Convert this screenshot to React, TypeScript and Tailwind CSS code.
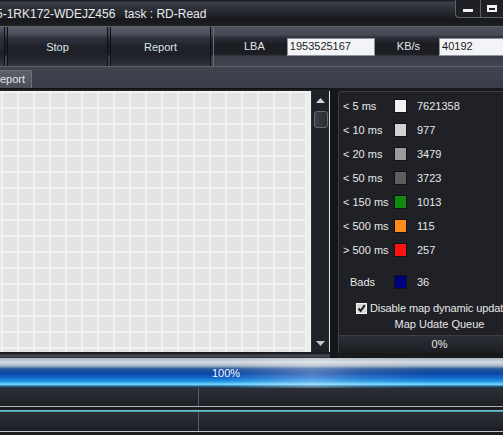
import React from "react";

const legend = [
  { label: "< 5 ms", color: "#f2f2f2", value: "7621358" },
  { label: "< 10 ms", color: "#d2d2d2", value: "977" },
  { label: "< 20 ms", color: "#9c9c9c", value: "3479" },
  { label: "< 50 ms", color: "#5e5e5e", value: "3723" },
  { label: "< 150 ms", color: "#108a10", value: "1013" },
  { label: "< 500 ms", color: "#ff8c1a", value: "115" },
  { label: "> 500 ms", color: "#ff1212", value: "257" },
];

function Swatch({ color }: { color: string }) {
  return (
    <div
      className="w-[13px] h-[14px] shrink-0 border border-[#111214]"
      style={{ backgroundColor: color }}
    />
  );
}

function ToolButton({ label, w }: { label: string; w: string }) {
  return (
    <div
      className={`${w} h-[39px] shrink-0 flex items-center justify-center border-x border-[#0f1013] bg-[linear-gradient(to_bottom,#5a5e6a_0%,#4c505c_18%,#30343e_28%,#1f222a_50%,#1d2027_70%,#2a2e38_92%,#33373f_100%)] text-[#dfe3ea]`}
    >
      <span className="relative mt-[1px]">{label}</span>
    </div>
  );
}

export default function App() {
  return (
    <div className="w-[503px] h-[435px] overflow-hidden bg-[#1a1c20] font-['Liberation_Sans',Arial,sans-serif] text-[11px] text-[#e6e8ec] leading-none select-none">
      {/* Title bar */}
      <div className="relative h-[26px] flex items-center bg-[linear-gradient(to_bottom,#0e0f11_0%,#3c3f47_8%,#2c2f36_35%,#17191d_75%,#1d1f23_100%)]">
        <div className="flex items-center ml-[-4px] mt-[2px] text-[#e8eaee] text-[12px] whitespace-nowrap">
          <span>5-1RK172-WDEJZ456</span>
          <span className="ml-[9px]">task : RD-Read</span>
        </div>
        <div className="absolute right-0 top-0 flex h-[18px]">
          <div className="w-[25px] h-[18px] rounded-bl-[4px] border-l border-b border-[#5d616b] bg-[#1e2025] flex items-center justify-center">
            <div className="w-[10px] h-[3px] bg-[#f2f2f2] mt-[4px]" />
          </div>
          <div className="w-[23px] h-[18px] border-l border-b border-[#5d616b] bg-[#1e2025] flex items-center pl-[6px]">
            <div className="w-[10px] h-[7px] border-[2px] border-t-[3px] border-[#f2f2f2]" />
          </div>
        </div>
      </div>
      <div className="h-[1px] bg-[#5e626c]" />

      {/* Toolbar */}
      <div className="h-[39px] flex gap-[2px] bg-[linear-gradient(to_bottom,#4f535f_0%,#454955_20%,#2a2d35_28%,#1b1d23_45%,#1c1e24_70%,#3a3e49_75%,#40444f_100%)] text-[11px] whitespace-nowrap">
        <div className="w-[5px] h-[39px] shrink-0 border-r border-[#0f1013] bg-[linear-gradient(to_bottom,#565a66_0%,#2e323c_28%,#1d2027_70%,#33373f_100%)]" />
        <ToolButton label="Stop" w="w-[101px]" />
        <ToolButton label="Report" w="w-[101px]" />
        <div className="flex items-center pl-[30px] shrink-0 border-l border-[#6a6e7a]">
          <span className="text-[#e4e6ea]">LBA</span>
          <div className="ml-[22px] w-[88px] h-[18px] bg-[#f3f4f7] border border-[#8e949e] flex items-center pl-[2px] text-[#1a1a1a] text-[11px]">
            1953525167
          </div>
          <span className="ml-[22px] text-[#e4e6ea]">KB/s</span>
          <div className="ml-[19px] w-[88px] h-[18px] bg-[#f3f4f7] border border-[#8e949e] flex items-center pl-[2px] text-[#1a1a1a] text-[11px]">
            40192
          </div>
        </div>
      </div>
      <div className="h-[1px] bg-[#5c606b]" />

      {/* Tab row */}
      <div className="h-[21px] flex items-end bg-[linear-gradient(to_bottom,#41444e_0%,#3a3d47_100%)]">
        <div className="ml-[-14px] h-[18px] px-[6px] flex items-center rounded-tr-[2px] border-t border-r border-[#6e727c] bg-[linear-gradient(to_bottom,#5c606b_0%,#4a4e58_100%)] text-[#e4e6ea]">
          Report
        </div>
      </div>

      {/* Main */}
      <div className="h-[270px] flex bg-[#17191d]">
        <div className="w-[330px] shrink-0 flex flex-col">
          <div className="h-[3px] bg-[linear-gradient(to_bottom,#0c0d0f,#26282e)]" />
          <div className="h-[261px] flex">
            <div className="w-[311px] h-full bg-[#eceef0] pr-[5px]">
              <div className="w-full h-full bg-[#e2e3e5] bg-[linear-gradient(to_right,#f2f2f3_0px,#f2f2f3_2px,transparent_2px),linear-gradient(to_bottom,#f2f2f3_0px,#f2f2f3_2px,transparent_2px)] [background-size:16px_16px] [background-position:1px_0px]" />
            </div>
            <div className="w-[18px] h-full bg-[#1f2228] border-l border-[#2b2e35] flex flex-col items-center relative">
              <svg width="9" height="5" viewBox="0 0 9 5" className="mt-[7px]">
                <path d="M0 5 L4.5 0 L9 5 Z" fill="#d0d4da" />
              </svg>
              <div className="mt-[8px] w-[14px] h-[17px] rounded-[3px] border border-[#646871] bg-[linear-gradient(to_right,#3a3e47,#2a2d34)]" />
              <svg width="9" height="5" viewBox="0 0 9 5" className="absolute bottom-[6px]">
                <path d="M0 0 L9 0 L4.5 5 Z" fill="#c4c8ce" />
              </svg>
            </div>
            <div className="w-[1px] h-full bg-[#e2e4e8]" />
          </div>
          <div className="h-[6px] bg-[linear-gradient(to_bottom,#101113_0%,#2c2f36_40%,#4a4e56_60%,#2a2d33_100%)]" />
        </div>
        <div className="w-[8px] shrink-0 bg-[#141619]" />
        <div className="w-[202px] shrink-0 mt-[3px] h-[262px] rounded-tl-[4px] border-l border-t border-[#3c3f47] bg-[#1f2126] flex flex-col pt-[2px] text-[#e8e8ea] whitespace-nowrap">
          {legend.map((r) => (
            <div key={r.label} className="h-[24px] flex items-center pl-[4px]">
              <span className="w-[51px]">{r.label}</span>
              <Swatch color={r.color} />
              <span className="ml-[10px]">{r.value}</span>
            </div>
          ))}
          <div className="h-[24px] mt-[8px] flex items-center pl-[11px]">
            <span className="w-[44px]">Bads</span>
            <Swatch color="#00007e" />
            <span className="ml-[10px]">36</span>
          </div>
          <div className="h-[16px] mt-[6px] flex items-center pl-[17px]">
            <div className="w-[11px] h-[11px] border border-[#f4f4f4] bg-[#d8d8d8] flex items-center justify-center">
              <svg width="9" height="9" viewBox="0 0 9 9">
                <path d="M1.5 4.5 L3.6 7 L7.8 1.2" stroke="#202020" strokeWidth="2" fill="none" />
              </svg>
            </div>
            <span className="ml-[3px] tracking-[-0.1px]">Disable map dynamic update</span>
          </div>
          <div className="h-[16px] flex items-center justify-center">Map Udate Queue</div>
          <div className="mt-[3px] h-[18px] border-t border-[#3c3f48] bg-[linear-gradient(to_bottom,#2c2f37_0%,#23262c_50%,#1b1d22_100%)] flex items-center justify-center">
            0%
          </div>
        </div>
      </div>

      {/* Main progress */}
      <div className="h-[30px] flex items-center pl-[212px] text-[#f2f6ff] bg-[linear-gradient(to_right,transparent_45%,rgba(255,255,255,0.28)_62%,rgba(255,255,255,0.1)_72%,transparent_85%),linear-gradient(to_bottom,#a9b4c0_0%,#d3dae2_14%,#a8b6c6_26%,#2a5a9c_36%,#0c45a2_50%,#1262c4_64%,#1f96e6_78%,#7ed8fb_88%,#2a7cb0_93%,#15283a_100%)]">
        <span className="mt-[1px]">100%</span>
      </div>

      {/* Lower rows */}
      <div className="h-[18px] flex bg-[linear-gradient(to_bottom,#2c2f37,#1d1f25)]">
        <div className="w-[199px] border-r border-[#5a5e68]" />
      </div>
      <div className="h-[1px] bg-[#aab2ba]" />
      <div className="h-[3px] bg-[#1b1d21]" />
      <div className="h-[2px] bg-[linear-gradient(to_bottom,#7fd6e4,#3f8a98)]" />
      <div className="h-[19px] flex bg-[linear-gradient(to_bottom,#2c2f37,#1d1f25)]">
        <div className="w-[199px] border-r border-[#5a5e68]" />
      </div>
      <div className="h-[1px] bg-[#bfc5cb]" />
      <div className="h-[4px] bg-[#1a1c20]" />
    </div>
  );
}
